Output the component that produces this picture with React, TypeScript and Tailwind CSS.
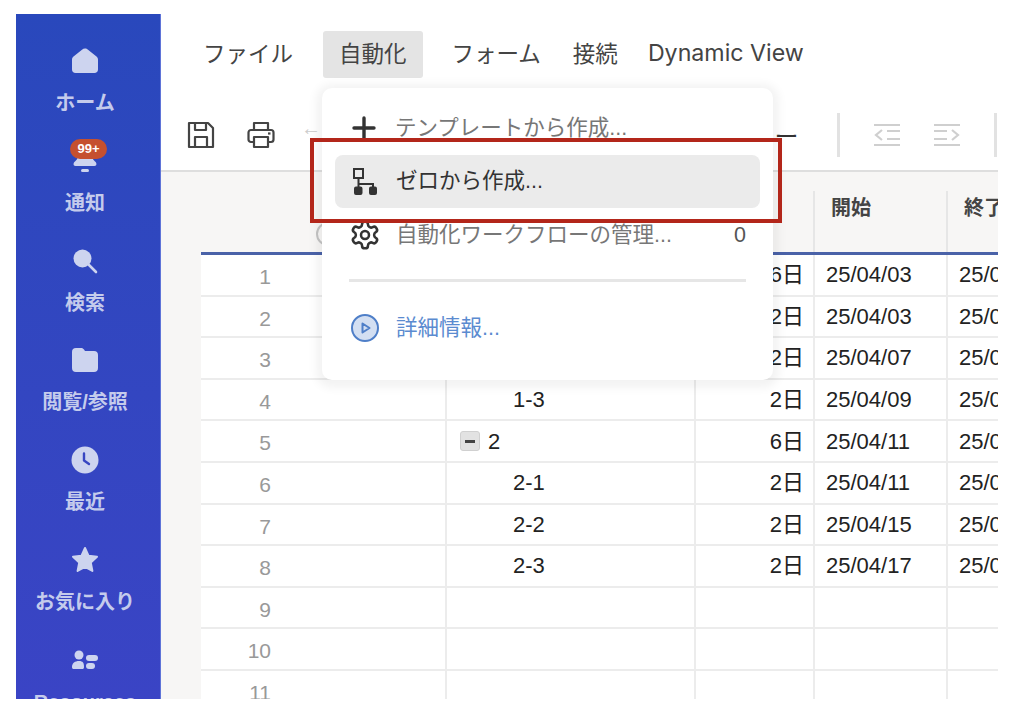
import React from 'react';

const font = { fontFamily: '"Liberation Sans", "Noto Sans CJK JP", sans-serif' };

const HomeIcon = () => (
  <svg width="28" height="26" viewBox="0 0 28 26" fill="#cdd4ef">
    <path d="M14 0.5 C15.2 0.5 16.2 1 17 1.7 L25.5 8.6 C26.6 9.5 27 10.4 27 11.8 V21.5 C27 23.8 25.6 25 23.4 25 H4.6 C2.4 25 1 23.8 1 21.5 V11.8 C1 10.4 1.4 9.5 2.5 8.6 L11 1.7 C11.8 1 12.8 0.5 14 0.5 Z" />
  </svg>
);

const BellIcon = () => (
  <svg width="28" height="26" viewBox="0 0 28 26" fill="#cdd4ef">
    <path d="M8 4 H20 C20.5 8 21 11 24 13.5 C26 15 26 18 23.5 18 H4.5 C2 18 2 15 4 13.5 C7 11 7.5 8 8 4 Z" />
    <rect x="10" y="21" width="8" height="3" rx="1.5" />
  </svg>
);

const SearchIcon = () => (
  <svg width="28" height="26" viewBox="0 0 28 26">
    <circle cx="11.5" cy="10.5" r="9" fill="#cdd4ef" />
    <path d="M18 17 L25 24" stroke="#cdd4ef" strokeWidth="2.6" strokeLinecap="round" />
  </svg>
);

const FolderIcon = () => (
  <svg width="28" height="26" viewBox="0 0 28 26" fill="#cdd4ef">
    <path d="M5 1 H10 C11.5 1 12.3 1.6 13 2.6 L14 4 H23 C25.6 4 27 5.4 27 8 V21 C27 23.6 25.6 25 23 25 H5 C2.4 25 1 23.6 1 21 V5 C1 2.4 2.4 1 5 1 Z" />
  </svg>
);

const ClockIcon = () => (
  <svg width="28" height="28" viewBox="0 0 28 28">
    <circle cx="14" cy="14" r="13.5" fill="#cdd4ef" />
    <path d="M13 7.5 V14.5 L18 18" fill="none" stroke="#3846c2" strokeWidth="2.4" strokeLinecap="round" strokeLinejoin="round" />
  </svg>
);

const StarIcon = () => (
  <svg width="28" height="28" viewBox="0 0 28 28" fill="#cdd4ef" stroke="#cdd4ef" strokeWidth="2" strokeLinejoin="round">
    <path d="M14 2 L17.6 9.8 L26 10.8 L19.8 16.6 L21.4 25 L14 20.8 L6.6 25 L8.2 16.6 L2 10.8 L10.4 9.8 Z" />
  </svg>
);

const PeopleIcon = () => (
  <svg width="28" height="20" viewBox="0 0 28 20" fill="#cdd4ef">
    <circle cx="8" cy="5" r="4.5" />
    <path d="M1 17 C1 13 4 11 8 11 C12 11 13 13 13 17 C13 18.5 12.5 19 11 19 H3 C1.5 19 1 18.5 1 17 Z" />
    <rect x="15" y="5" width="12" height="6" rx="3" />
    <rect x="15" y="13" width="9" height="6" rx="3" />
  </svg>
);

const SaveIcon = () => (
  <svg width="28" height="28" viewBox="0 0 28 28" fill="none" stroke="#444" strokeWidth="2.2" strokeLinejoin="round">
    <path d="M2 2 H21 L26 7 V26 H2 Z" />
    <path d="M8 2 V9 H19 V2" />
    <path d="M8 26 V16 H20 V26" />
  </svg>
);

const PrintIcon = () => (
  <svg width="28" height="28" viewBox="0 0 28 28" fill="none" stroke="#444" strokeWidth="2.2" strokeLinejoin="round">
    <path d="M7 9 V2 H21 V9" />
    <path d="M7 21 H4 C2.6 21 1.5 20 1.5 18.5 V11.5 C1.5 10 2.6 9 4 9 H24 C25.4 9 26.5 10 26.5 11.5 V18.5 C26.5 20 25.4 21 24 21 H21" />
    <path d="M7 16 H21 V26 H7 Z" />
    <path d="M21 12.5 H23.5" />
  </svg>
);

const IndentIcon = ({ flip }: { flip?: boolean }) => (
  <svg width="28" height="24" viewBox="0 0 28 24" fill="none" stroke="#cfcfcf" strokeWidth="2.2">
    <path d="M1 2 H27 M1 22 H27" />
    {flip ? <path d="M1 8 H14 M1 16 H14 M19 7 L25 12 L19 17" /> : <path d="M14 8 H27 M14 16 H27 M9 7 L3 12 L9 17" />}
  </svg>
);

const sideItems = [
  { label: 'ホーム', icon: <HomeIcon /> },
  { label: '通知', icon: <BellIcon />, badge: '99+' },
  { label: '検索', icon: <SearchIcon /> },
  { label: '閲覧/参照', icon: <FolderIcon /> },
  { label: '最近', icon: <ClockIcon /> },
  { label: 'お気に入り', icon: <StarIcon /> },
  { label: 'Resources', icon: <PeopleIcon /> },
];

const rows = [
  { n: '1', name: '1', head: true, days: '6日', start: '25/04/03', end: '25/04/10' },
  { n: '2', name: '1-1', days: '2日', start: '25/04/03', end: '25/04/04' },
  { n: '3', name: '1-2', days: '2日', start: '25/04/07', end: '25/04/08' },
  { n: '4', name: '1-3', days: '2日', start: '25/04/09', end: '25/04/10' },
  { n: '5', name: '2', head: true, days: '6日', start: '25/04/11', end: '25/04/18' },
  { n: '6', name: '2-1', days: '2日', start: '25/04/11', end: '25/04/14' },
  { n: '7', name: '2-2', days: '2日', start: '25/04/15', end: '25/04/16' },
  { n: '8', name: '2-3', days: '2日', start: '25/04/17', end: '25/04/18' },
  { n: '9' },
  { n: '10' },
  { n: '11' },
];

const Row = ({ r }: { r: (typeof rows)[number] }) => (
  <div className="grid h-[41.6px] grid-cols-[246px_249px_119px_133px_159px] border-b-2 border-[#ececec] bg-white text-[22px] text-[#222]">
    <div className="flex items-center justify-end border-r-2 border-[#ececec] pr-[174px] pt-[4px] text-[21px] text-[#999]">{r.n}</div>
    <div className="flex items-center border-r-2 border-[#ececec]">
      {r.head ? (
        <>
          <span className="ml-[13px] mr-[8px] flex h-[20px] w-[20px] items-center justify-center rounded-[3px] border border-[#d0d0d0] bg-[#e2e2e2]">
            <span className="h-[3px] w-[10px] bg-[#444]" />
          </span>
          {r.name}
        </>
      ) : (
        <span className="ml-[66px]">{r.name}</span>
      )}
    </div>
    <div className="flex items-center justify-end border-r-2 border-[#ececec] pr-[9px]">{r.days}</div>
    <div className="flex items-center border-r-2 border-[#ececec] pl-[11px]">{r.start}</div>
    <div className="flex items-center pl-[11px] whitespace-nowrap">{r.end}</div>
  </div>
);

export default function App() {
  return (
    <div className="relative h-[718px] w-[1024px] overflow-hidden bg-white" style={font}>
      <div className="ml-[16px] flex h-[699px] w-[982px] overflow-hidden pt-[14px]">
        {/* sidebar */}
        <div className="h-full w-[145px] shrink-0 border-r border-[#5f74d8] bg-gradient-to-b from-[#2948bc] to-[#3a44c5] pr-[6px] pt-[33px]">
          {sideItems.map((item) => (
            <div key={item.label} className="relative flex h-[99.8px] flex-col items-center">
              <div className="flex h-[28px] items-center justify-center">{item.icon}</div>
              {item.badge && (
                <span className="absolute left-[54px] top-[-8px] flex h-[20px] w-[37px] items-center justify-center rounded-full bg-[#c5502f] text-[13px] font-bold text-white">
                  {item.badge}
                </span>
              )}
              <div className="mt-[15px] text-[20px] leading-[26px] font-semibold whitespace-nowrap text-[#c4cbec]">{item.label}</div>
            </div>
          ))}
        </div>

        {/* main */}
        <div className="relative min-w-0 flex-1">
          <div className="h-[158px] border-b-2 border-[#dedede] bg-white">
            <div className="flex items-center pt-[17px] text-[22.5px] text-[#444]">
              <span className="ml-[42px]">ファイル</span>
              <span className="ml-[30px] flex h-[47px] items-center rounded-[3px] bg-[#e4e4e4] px-[16px]">自動化</span>
              <span className="ml-[29px]">フォーム</span>
              <span className="ml-[32px]">接続</span>
              <span className="ml-[30px] mb-[2px] text-[23.2px] whitespace-nowrap" style={{ fontFamily: 'Inter, sans-serif' }}>Dynamic View</span>
            </div>
            <div className="mt-[34px] flex h-[46px] items-center">
              <span className="ml-[26px]"><SaveIcon /></span>
              <span className="ml-[32px]"><PrintIcon /></span>
              <span className="ml-[26px] mb-[14px] text-[20px] text-[#ccc]">←</span>
              <span className="ml-[358px] mt-[4px] text-[24px] whitespace-nowrap text-[#333]">フィルター</span>
              <span className="ml-[38px] h-[44px] w-[3px] bg-[#e2e2e2]" />
              <span className="ml-[33px]"><IndentIcon /></span>
              <span className="ml-[32px]"><IndentIcon flip /></span>
              <span className="ml-[33px] h-[44px] w-[3px] bg-[#e2e2e2]" />
            </div>
          </div>

          <div className="h-[527px] overflow-hidden bg-[#f7f6f5] pl-[40px]">
            <div className="grid h-[83px] grid-cols-[246px_249px_119px_133px_159px] border-b-[3px] border-[#4a62a8] text-[20px] font-semibold text-[#444]">
              <div className="pl-[115px] pt-[50px]">
                <span className="block h-[24px] w-[24px] rounded-full border-2 border-[#c4c4c4]" />
              </div>
              <div />
              <div className="mt-[19px] border-r-2 border-[#e6e6e6]" />
              <div className="mt-[19px] border-r-2 border-[#e6e6e6] pl-[16px] pt-[2px]">開始</div>
              <div className="mt-[19px] pl-[16px] pt-[2px] whitespace-nowrap">終了</div>
            </div>
            {rows.map((r) => (
              <Row key={r.n} r={r} />
            ))}
          </div>

          {/* open menu */}
          <div className="absolute left-[161px] top-[74px] h-[292px] w-[451px] rounded-[10px] bg-white px-[13px] pt-[13px] text-[21.5px] shadow-[0_2px_10px_6px_rgba(0,0,0,0.05)]">
            <div className="flex h-[53.5px] items-center px-[16px] text-[#777]">
              <svg width="26" height="26" viewBox="0 0 26 26" stroke="#333" strokeWidth="3.4" strokeLinecap="round"><path d="M13 3 V23 M3 13 H23" /></svg>
              <span className="ml-[18px]">テンプレートから作成...</span>
            </div>
            <div className="flex h-[53.5px] items-center rounded-[8px] bg-[#ebebeb] px-[16px] text-[#333]">
              <svg width="26" height="28" viewBox="0 0 26 28" fill="none" stroke="#333" strokeWidth="2">
                <rect x="3" y="2" width="9" height="9" />
                <path d="M7.5 11 V24 M7.5 17 H22 V24" />
                <rect x="4" y="20.5" width="6.5" height="6.5" fill="#333" rx="1" />
                <rect x="19" y="20.5" width="6" height="6.5" fill="#333" rx="1" />
              </svg>
              <span className="ml-[19px]">ゼロから作成...</span>
            </div>
            <div className="flex h-[53.5px] items-center px-[14px] text-[#777]">
              <svg width="32" height="32" viewBox="0 0 24 24" fill="none" stroke="#333" strokeWidth="1.9" strokeLinecap="round" strokeLinejoin="round">
                <path d="M12.22 2h-.44a2 2 0 0 0-2 2v.18a2 2 0 0 1-1 1.73l-.43.25a2 2 0 0 1-2 0l-.15-.08a2 2 0 0 0-2.73.73l-.22.38a2 2 0 0 0 .73 2.73l.15.1a2 2 0 0 1 1 1.72v.51a2 2 0 0 1-1 1.74l-.15.09a2 2 0 0 0-.73 2.73l.22.38a2 2 0 0 0 2.73.73l.15-.08a2 2 0 0 1 2 0l.43.25a2 2 0 0 1 1 1.73V20a2 2 0 0 0 2 2h.44a2 2 0 0 0 2-2v-.18a2 2 0 0 1 1-1.73l.43-.25a2 2 0 0 1 2 0l.15.08a2 2 0 0 0 2.73-.73l.22-.39a2 2 0 0 0-.73-2.73l-.15-.08a2 2 0 0 1-1-1.74v-.5a2 2 0 0 1 1-1.74l.15-.09a2 2 0 0 0 .73-2.73l-.22-.38a2 2 0 0 0-2.73-.73l-.15.08a2 2 0 0 1-2 0l-.43-.25a2 2 0 0 1-1-1.73V4a2 2 0 0 0-2-2z" />
                <circle cx="12" cy="12" r="3" />
              </svg>
              <span className="ml-[15px]">自動化ワークフローの管理...</span>
              <span className="ml-auto text-[#555]">0</span>
            </div>
            <div className="mx-[14px] mt-[17px] h-[3px] bg-[#e6e6e6]" />
            <div className="mt-[20px] flex h-[53.5px] items-center px-[16px] text-[#5b8bd0]">
              <svg width="28" height="28" viewBox="0 0 28 28">
                <circle cx="14" cy="14" r="13" fill="#d3dff2" stroke="#4f7fc8" strokeWidth="2" />
                <path d="M11.5 9.5 L18.5 14 L11.5 18.5 Z" fill="none" stroke="#4f7fc8" strokeWidth="2" strokeLinejoin="round" />
              </svg>
              <span className="ml-[17px]">詳細情報...</span>
            </div>
          </div>
        </div>
      </div>

      {/* annotation around the highlighted item */}
      <div className="absolute left-[310px] top-[138px] h-[85px] w-[472px] border-[4px] border-[#b3261a]" />
    </div>
  );
}
